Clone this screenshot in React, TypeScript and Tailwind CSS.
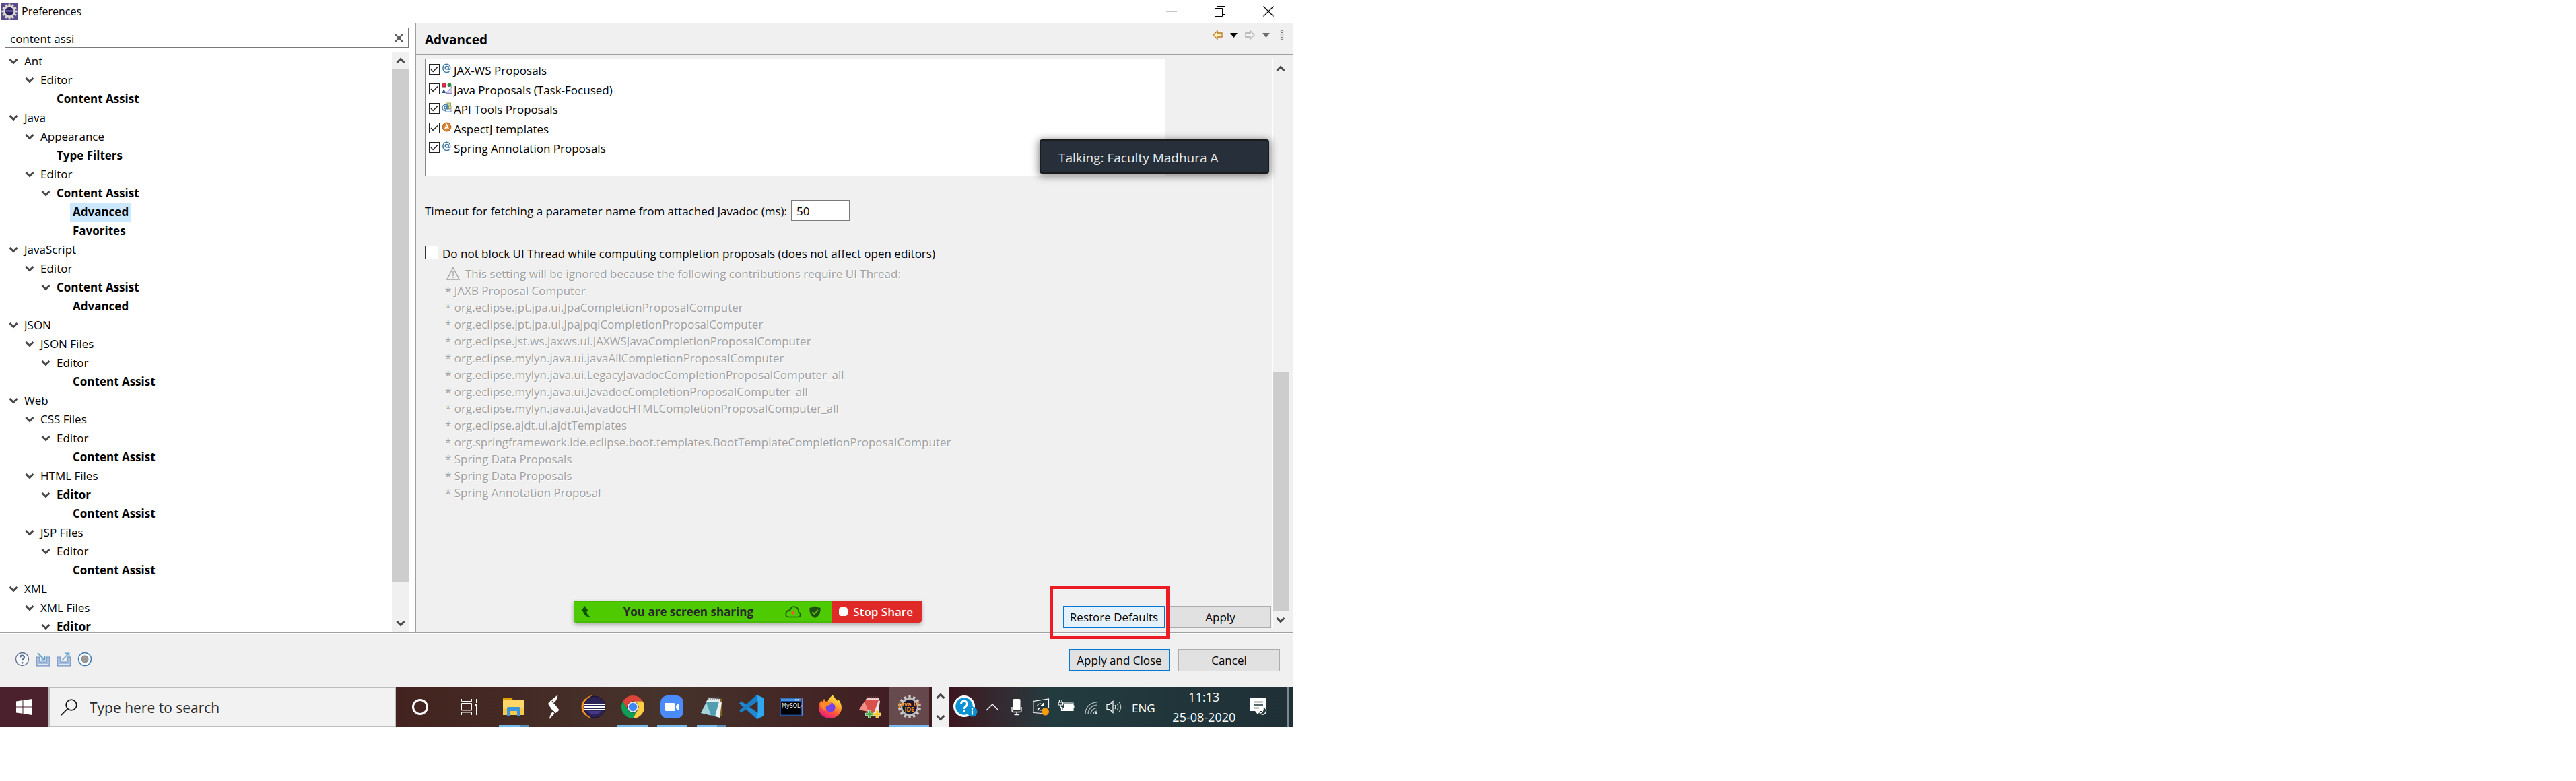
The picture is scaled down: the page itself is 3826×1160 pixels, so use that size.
import type { ReactNode } from 'react';

type Node = { label: string; level: number; open?: boolean; bold?: boolean; selected?: boolean };

const tree: Node[] = [
  { label: 'Ant', level: 0, open: true },
  { label: 'Editor', level: 1, open: true },
  { label: 'Content Assist', level: 2, bold: true },
  { label: 'Java', level: 0, open: true },
  { label: 'Appearance', level: 1, open: true },
  { label: 'Type Filters', level: 2, bold: true },
  { label: 'Editor', level: 1, open: true },
  { label: 'Content Assist', level: 2, open: true, bold: true },
  { label: 'Advanced', level: 3, bold: true, selected: true },
  { label: 'Favorites', level: 3, bold: true },
  { label: 'JavaScript', level: 0, open: true },
  { label: 'Editor', level: 1, open: true },
  { label: 'Content Assist', level: 2, open: true, bold: true },
  { label: 'Advanced', level: 3, bold: true },
  { label: 'JSON', level: 0, open: true },
  { label: 'JSON Files', level: 1, open: true },
  { label: 'Editor', level: 2, open: true },
  { label: 'Content Assist', level: 3, bold: true },
  { label: 'Web', level: 0, open: true },
  { label: 'CSS Files', level: 1, open: true },
  { label: 'Editor', level: 2, open: true },
  { label: 'Content Assist', level: 3, bold: true },
  { label: 'HTML Files', level: 1, open: true },
  { label: 'Editor', level: 2, open: true, bold: true },
  { label: 'Content Assist', level: 3, bold: true },
  { label: 'JSP Files', level: 1, open: true },
  { label: 'Editor', level: 2, open: true },
  { label: 'Content Assist', level: 3, bold: true },
  { label: 'XML', level: 0, open: true },
  { label: 'XML Files', level: 1, open: true },
  { label: 'Editor', level: 2, open: true, bold: true },
];

const indents = ['pl-2', 'pl-8', 'pl-14', 'pl-20'];

const contributions = [
  'JAXB Proposal Computer',
  'org.eclipse.jpt.jpa.ui.JpaCompletionProposalComputer',
  'org.eclipse.jpt.jpa.ui.JpaJpqlCompletionProposalComputer',
  'org.eclipse.jst.ws.jaxws.ui.JAXWSJavaCompletionProposalComputer',
  'org.eclipse.mylyn.java.ui.javaAllCompletionProposalComputer',
  'org.eclipse.mylyn.java.ui.LegacyJavadocCompletionProposalComputer_all',
  'org.eclipse.mylyn.java.ui.JavadocCompletionProposalComputer_all',
  'org.eclipse.mylyn.java.ui.JavadocHTMLCompletionProposalComputer_all',
  'org.eclipse.ajdt.ui.ajdtTemplates',
  'org.springframework.ide.eclipse.boot.templates.BootTemplateCompletionProposalComputer',
  'Spring Data Proposals',
  'Spring Data Proposals',
  'Spring Annotation Proposal',
];

function Chevron({ up = false }: { up?: boolean }) {
  return (
    <svg width="14" height="14" viewBox="0 0 14 14" fill="none" stroke="#484848" strokeWidth="3">
      <path d={up ? 'M1.5 10 7 4.5 12.5 10' : 'M1.5 4 7 9.5 12.5 4'} />
    </svg>
  );
}

function Gear() {
  const teeth = Array.from({ length: 12 }, (_, i) => i * 30);
  return (
    <svg width="24" height="24" viewBox="0 0 24 24">
      <rect width="24" height="24" fill="#5b4a8c" />
      {teeth.map((a) => (
        <rect key={a} x="10.6" y="0.5" width="2.8" height="5" fill="#dcd9d2" transform={`rotate(${a} 12 12)`} />
      ))}
      <circle cx="12" cy="12" r="7.6" fill="#2f2660" stroke="#dcd9d2" strokeWidth="2.6" />
      <path d="M6.5 10.5h11M6 12.5h12M6.5 14.5h11" stroke="#5d5496" strokeWidth=".9" />
    </svg>
  );
}

function AtIcon() {
  return (
    <svg width="16" height="16" viewBox="0 0 16 16" fill="none" stroke="#3f7aa6" strokeWidth="1.5">
      <circle cx="7.5" cy="6.8" r="2.3" />
      <path d="M10 4.3v4c0 1.6 2.7 1.5 2.7-1.6C12.7 3.3 10.4 1.2 7.4 1.2 4.2 1.2 1.9 3.7 1.9 7.2s2.3 6.3 5.6 6.3c1.5 0 2.9-.4 4-1.1" />
    </svg>
  );
}

function TaskIcon() {
  return (
    <svg width="16" height="16" viewBox="0 0 16 16">
      <rect x=".5" y=".5" width="5.5" height="5.5" fill="#d8304a" stroke="#a81f38" />
      <circle cx="11.5" cy="3.2" r="2.9" fill="#2f8a4e" />
      <path d="M3.2 9 6 15H.4Z" fill="#1d4f8f" />
      <path d="M15.5 5v10.500H6.500Z" fill="#cfc8ea" stroke="#8a7fc0" />
      <path d="M13 10.500v2.700h-2.600Z" fill="#fff" />
    </svg>
  );
}

function ApiIcon() {
  return (
    <svg width="16" height="16" viewBox="0 0 16 16" fill="none">
      <rect x="6.5" y="1" width="7" height="4" fill="#cfe39a" stroke="#8fae50" />
      <rect x="8.5" y="6" width="5.5" height="3.5" fill="#f6e9a8" stroke="#b9a45c" />
      <rect x="6" y="11" width="8" height="3" fill="#fff" stroke="#5d8bb5" />
      <circle cx="6" cy="8" r="2" stroke="#4a83ad" strokeWidth="1.3" fill="#e8f2fa" />
      <path d="M8.2 6v3c0 1.2 2 1.2 2-1.2C10.2 5.2 8.5 3.5 6 3.5 3.2 3.5 1 5.4 1 8.2s2 4.3 5 4.3" stroke="#4a83ad" strokeWidth="1.3" />
    </svg>
  );
}

function AspectIcon() {
  return (
    <svg width="16" height="16" viewBox="0 0 16 16">
      <circle cx="7.5" cy="7.5" r="6.5" fill="#d98434" stroke="#b8651c" />
      <path d="M4.6 11 7.5 4 10.4 11M5.7 8.7h3.600" fill="none" stroke="#fff" strokeWidth="1.5" />
    </svg>
  );
}

const proposals: { label: string; icon: ReactNode }[] = [
  { label: 'JAX-WS Proposals', icon: <AtIcon /> },
  { label: 'Java Proposals (Task-Focused)', icon: <TaskIcon /> },
  { label: 'API Tools Proposals', icon: <ApiIcon /> },
  { label: 'AspectJ templates', icon: <AspectIcon /> },
  { label: 'Spring Annotation Proposals', icon: <AtIcon /> },
];

function TitleBar() {
  return (
    <header className="flex h-[34px] shrink-0 items-center bg-white">
      <div className="flex flex-1 items-center gap-1.5 pl-0.5">
        <Gear />
        <h1 className="text-base">Preferences</h1>
      </div>
      <div className="flex items-center gap-14 pr-7">
        <button type="button" aria-label="Minimize" className="flex w-4 justify-center">
          <span className="h-px w-4 bg-[#c4c4c4]" />
        </button>
        <button type="button" aria-label="Restore" className="flex w-4 justify-center">
          <svg width="16" height="16" viewBox="0 0 16 16" fill="none" stroke="#000">
            <path d="M.5 3.5h11v12H.5ZM3.5 3.5v-3h12v12h-4" />
          </svg>
        </button>
        <button type="button" aria-label="Close" className="flex w-4 justify-center">
          <svg width="16" height="16" viewBox="0 0 16 16" fill="none" stroke="#000" strokeWidth="1.2">
            <path d="m.5.5 15 15M15.5.5l-15 15" />
          </svg>
        </button>
      </div>
    </header>
  );
}

function Sidebar() {
  return (
    <nav aria-label="Preference pages" className="flex flex-col border-r border-[#a0a0a0] bg-white pt-[7px]">
      <div className="mr-2.5 ml-[7px] flex h-[30px] items-center border border-[#7a7a7a] bg-white">
        <input aria-label="Filter" defaultValue="content assi" className="min-w-0 flex-1 pt-1 pl-[7px] text-[17px] outline-none" />
        <button type="button" aria-label="Clear" className="flex w-7 justify-center">
          <svg width="13" height="13" viewBox="0 0 13 13" stroke="#5a5a5a" strokeWidth="2.2">
            <path d="m1 1 11 11M12 1 1 12" />
          </svg>
        </button>
      </div>
      <div className="mt-1.5 flex flex-1">
        <ul className="h-0 min-h-full flex-1 overflow-hidden">
          {tree.map((n, i) => (
            <li key={i} className={`flex h-7 items-center ${indents[n.level]}`}>
              {n.open ? (
                <button type="button" aria-label={`Collapse ${n.label}`} className="flex w-6 justify-center">
                  <Chevron />
                </button>
              ) : (
                <span className="w-6" />
              )}
              <a
                href="#"
                className={`px-1 text-[17px] leading-7 ${n.bold ? 'font-bold' : ''} ${n.selected ? 'bg-[#cce8ff]' : ''}`}
              >
                {n.label}
              </a>
            </li>
          ))}
        </ul>
        <div className="mr-2.5 flex w-[25px] flex-col bg-[#f0f0f0]">
          <button type="button" aria-label="Scroll up" className="flex h-[26px] items-center justify-center">
            <Chevron up />
          </button>
          <div className="flex-1">
            <div className="h-[94%] bg-[#cdcdcd]" />
          </div>
          <button type="button" aria-label="Scroll down" className="flex h-[26px] items-center justify-center">
            <Chevron />
          </button>
        </div>
      </div>
    </nav>
  );
}

function ShareBar() {
  return (
    <div className="absolute bottom-[14px] left-[18%] flex h-[33px] items-stretch rounded-b shadow-[0_3px_6px_rgba(0,0,0,0.3)]">
      <div className="flex w-[384px] items-center rounded-bl border border-t-2 border-b-2 border-[#46bb02] bg-[#4dca00] pl-2.5">
        <svg width="15" height="17" viewBox="0 0 15 17" fill="#0d5200">
          <path d="M5.5 0 0 7.5h3C3 12.5 7.5 17 15 16.5 10.5 15 8.3 11.5 8.5 7.5H11Z" />
        </svg>
        <p className="flex-1 text-center text-[17px] font-bold text-[#26282b]">You are screen sharing</p>
        <svg width="24" height="18" viewBox="0 0 24 18" className="mr-3">
          <path
            d="M4.5 16.5h15c4 0 4.4-5.5.8-7.2C20.5 4 17 1 12.5 1.2 9.5 1.3 8.3 4 7.5 6.2 3.5 6.500 1.5 9 1.2 12c-.3 2.7 1 4.5 3.3 4.5Z"
            fill="none"
            stroke="#1a5a0a"
            strokeWidth="1.7"
          />
          <ellipse cx="12" cy="10" rx="2.5" ry="2.7" fill="#f6553c" />
        </svg>
        <svg width="17" height="18" viewBox="0 0 17 18" className="mr-4">
          <path d="M8.5 0c2 2 5 2.6 8 2.7C17 9 15.5 15 8.5 18 1.5 15 0 9 .5 2.7 3.5 2.6 6.5 2 8.5 0Z" fill="#1f4d12" />
          <path d="m4.5 9 3 3 5.500-6" fill="none" stroke="#59d010" strokeWidth="1.8" />
        </svg>
      </div>
      <button type="button" className="flex w-[133px] items-center gap-2 rounded-br bg-[#e02a28] pl-2.5 text-[17px] font-semibold text-white">
        <span className="h-[13px] w-[13px] rounded-sm bg-white" />
        Stop Share
      </button>
    </div>
  );
}

function Page() {
  return (
    <section className="relative flex flex-col bg-[#f0f0f0]">
      <div className="flex h-[46px] items-center pl-[13px]">
        <h2 className="flex-1 pt-1 text-[19px] leading-7 font-bold">Advanced</h2>
        <div className="mb-2.5 flex items-center gap-[11px] pr-[13px]">
          <button type="button" aria-label="Back">
            <svg width="15" height="14" viewBox="0 0 15 14" fill="#fdf0bd" stroke="#b97a20" strokeWidth="1.3">
              <path d="M1 7 7 1v3h7v6H7v3Z" />
            </svg>
          </button>
          <button type="button" aria-label="Back history">
            <svg width="11" height="7" viewBox="0 0 11 7">
              <path d="M0 0h11L5.5 7Z" />
            </svg>
          </button>
          <button type="button" aria-label="Forward">
            <svg width="15" height="14" viewBox="0 0 15 14" fill="#f4f4f4" stroke="#ababab" strokeWidth="1.3">
              <path d="M14 7 8 1v3H1v6h7v3Z" />
            </svg>
          </button>
          <button type="button" aria-label="Forward history">
            <svg width="11" height="7" viewBox="0 0 11 7" fill="#6e6e6e">
              <path d="M0 0h11L5.5 7Z" />
            </svg>
          </button>
          <button type="button" aria-label="View menu" className="pl-1">
            <svg width="6" height="16" viewBox="0 0 6 16" fill="none" stroke="#6a6a6a" strokeWidth="1.2">
              <circle cx="3" cy="2.7" r="1.7" />
              <circle cx="3" cy="8" r="1.7" />
              <circle cx="3" cy="13.3" r="1.7" />
            </svg>
          </button>
        </div>
      </div>
      <div className="h-0.5 border-t border-[#a0a0a0] bg-white" />
      <div className="mt-[5px] mb-1.5 flex flex-1">
        <div className="flex flex-1 flex-col pl-[13px]">
          <div className="mr-[158px] border border-t-0 border-[#828790] bg-white">
            <ul className="w-[313px] border-r border-[#ecf0f8] pt-[3px] pb-[26px] pl-[5px]">
              {proposals.map((p) => (
                <li key={p.label}>
                  <label className="flex text-[17px] leading-[29px] whitespace-nowrap">
                    <span className="relative mt-[5px] h-4 w-4">
                      <input type="checkbox" defaultChecked className="block h-4 w-4 appearance-none border border-[#222] bg-white" />
                      <svg className="absolute inset-0" width="16" height="16" viewBox="0 0 16 16" fill="none" stroke="#222" strokeWidth="1.4">
                        <path d="m3 8 3.2 3.5L13 4.5" />
                      </svg>
                    </span>
                    <span className="mt-1 mr-0.5 ml-[3px]">{p.icon}</span>
                    {p.label}
                  </label>
                </li>
              ))}
            </ul>
          </div>
          <div className="mt-[35px] flex items-center gap-1.5 text-[17px]">
            <label htmlFor="timeout" className="pt-0.5">Timeout for fetching a parameter name from attached Javadoc (ms):</label>
            <input id="timeout" defaultValue="50" className="h-[31px] w-[87px] border border-[#7a7a7a] bg-white pt-0.5 pl-[7px]" />
          </div>
          <label className="mt-[35px] flex gap-1.5 text-[17px] leading-7">
            <input type="checkbox" className="mt-0.5 h-5 w-5 appearance-none border border-[#333] bg-white" />
            Do not block UI Thread while computing completion proposals (does not affect open editors)
          </label>
          <div className="mt-0.5 pl-[30px] text-[17px] leading-[25px] text-[#a0a0a0] [text-shadow:1px_1px_0_#fff]">
            <p className="flex h-[26px] items-center gap-2 pl-0.5">
              <svg width="20" height="20" viewBox="0 0 20 20" fill="none" stroke="#a0a0a0" strokeWidth="1.3">
                <path d="M10 1.5 19 19H1ZM10 7v7M10 15.5V17" />
              </svg>
              This setting will be ignored because the following contributions require UI Thread:
            </p>
            <ul>
              {contributions.map((c, i) => (
                <li key={i}>* {c}</li>
              ))}
            </ul>
          </div>
          <div className="mt-auto flex justify-end gap-[7px] pr-px text-[17px]">
            <div className="relative">
              <button type="button" className="h-[33px] w-[151px] border border-[#0078d7] bg-[#e5f1fb]">Restore Defaults</button>
              <span className="pointer-events-none absolute -top-[30px] -right-[7px] -bottom-4 -left-5 z-10 border-5 border-[#ed1c24]" />
            </div>
            <button type="button" className="h-[33px] w-[151px] border border-[#adadad] bg-[#e1e1e1]">Apply</button>
          </div>
        </div>
        <div className="mr-1.5 flex w-[25px] flex-col border-l border-white">
          <button type="button" aria-label="Scroll up" className="flex h-[30px] items-center justify-center">
            <Chevron up />
          </button>
          <div className="flex flex-1 flex-col justify-end">
            <div className="h-[45%] bg-[#cdcdcd]" />
          </div>
          <button type="button" aria-label="Scroll down" className="flex h-[25px] items-center justify-center">
            <Chevron />
          </button>
        </div>
      </div>
      <div className="absolute top-[173px] right-[35px] flex h-[51px] w-[341px] items-center rounded-sm border-2 border-[#1b1b1b] bg-[#262f3a] pt-1 pl-[26px] text-[19px] text-[#e8eaec] shadow-[0_2px_12px_2px_rgba(0,0,0,0.45)]">
        Talking: Faculty Madhura A
      </div>
      <ShareBar />
    </section>
  );
}

function Footer() {
  return (
    <footer className="flex h-20 shrink-0 items-center border-t border-white bg-[#f0f0f0] pr-[19px] pl-[22px] text-[17px]">
      <div className="flex flex-1 items-center gap-[9px] pb-1">
        <button type="button" aria-label="Help">
          <svg width="22" height="22" viewBox="0 0 22 22" fill="none" stroke="#5f6f93">
            <circle cx="11" cy="11" r="9.5" fill="#f7f8fb" strokeWidth="1.3" />
            <path d="M8 8.500C8 4.800 14 4.800 14 8.300c0 2.400-2.900 2.400-2.900 5M11.100 15v2.400" strokeWidth="2.4" />
          </svg>
        </button>
        <button type="button" aria-label="Import">
          <svg width="22" height="22" viewBox="0 0 22 22" fill="none">
            <path d="M1 8h5v7h10V8h5v13H1Z" fill="#a9bfe0" stroke="#6f8fc0" strokeWidth="1.2" />
            <path d="M3.500 10v8.500h15V10" stroke="#dfe8f5" />
            <path d="m3 2 10 10M13.5 6.500v6H8" stroke="#5fa3cc" strokeWidth="1.8" />
          </svg>
        </button>
        <button type="button" aria-label="Export">
          <svg width="22" height="22" viewBox="0 0 22 22" fill="none">
            <path d="M1 8h5v7h10V8h5v13H1Z" fill="#a9bfe0" stroke="#6f8fc0" strokeWidth="1.2" />
            <path d="M3.500 10v8.500h15V10" stroke="#dfe8f5" />
            <path d="M8 13 18 2.500M13 2.500h5.500V8" stroke="#5fa3cc" strokeWidth="1.8" />
          </svg>
        </button>
        <button type="button" aria-label="Record preferences">
          <svg width="22" height="22" viewBox="0 0 22 22">
            <circle cx="11" cy="11" r="9.5" fill="#f9fafc" stroke="#3d79ad" strokeWidth="1.5" />
            <circle cx="11" cy="11" r="5" fill="#9a9a9a" stroke="#7e7e7e" />
          </svg>
        </button>
      </div>
      <div className="flex gap-3">
        <button type="button" className="h-[33px] w-[151px] border-2 border-[#0078d7] bg-[#e1e1e1]">Apply and Close</button>
        <button type="button" className="h-[33px] w-[151px] border border-[#adadad] bg-[#e1e1e1]">Cancel</button>
      </div>
    </footer>
  );
}

const apps: { name: string; bar?: 'one' | 'two'; active?: boolean; icon: ReactNode }[] = [
  {
    name: 'File Explorer',
    bar: 'two',
    icon: (
      <svg width="34" height="30" viewBox="0 0 34 30">
        <path d="M1 2h13l2 3h17v22H1Z" fill="#ffd766" />
        <path d="M1 2c0-1 .5-1 1-1h12l1.5 2-1.5 2H1Z" fill="#e0a000" />
        <path d="M1 16h32v11H1Z" fill="#fbc94a" />
        <path d="M7 28V17q0-2 2-2h16q2 0 2 2v11h-5v-7H12v7Z" fill="#3a96dd" />
      </svg>
    ),
  },
  {
    name: 'S editor',
    icon: (
      <svg width="18" height="38" viewBox="0 0 18 38">
        <path d="M15.5 1C14.500 7 13 10 9.500 13L17.500 23.500C15 27 11 28 8.500 31L3 37C4 31 5.500 28 8.500 25.500L1 14.500C3 10 9 7 15.500 1Z" fill="#fff" />
        <path d="m7 10 2.500 4M9 25l2 4" stroke="#43302a" strokeWidth="1.2" />
      </svg>
    ),
  },
  {
    name: 'Eclipse',
    icon: (
      <svg width="38" height="36" viewBox="0 0 38 36">
        <path d="M18 1C9 2 1.5 9 1.5 18S9 34 18 35C4 27 4 9 18 1Z" fill="#f7941e" />
        <circle cx="21" cy="18" r="16" fill="#2c2255" stroke="#16102e" />
        <path d="M11 24h20a12 12 0 0 1-20 0Z" fill="#473788" />
        <path d="M5.5 14h31M5 18h32M5.5 22h31" stroke="#fff" strokeWidth="2.2" />
      </svg>
    ),
  },
  {
    name: 'Chrome',
    bar: 'one',
    icon: (
      <svg width="34" height="34" viewBox="0 0 24 24">
        <path d="M1.61 6A12 12 0 0 1 22.39 6H12A6 6 0 0 0 6.8 15Z" fill="#db4437" />
        <path d="M1.61 6 6.8 15a6 6 0 0 0 10.4 0L12 24A12 12 0 0 1 1.61 6Z" fill="#0f9d58" />
        <path d="M22.39 6H12a6 6 0 0 1 5.2 9L12 24A12 12 0 0 0 22.39 6Z" fill="#ffcd40" />
        <circle cx="12" cy="12" r="5.5" fill="#f1f1f1" />
        <circle cx="12" cy="12" r="4.4" fill="#4285f4" />
      </svg>
    ),
  },
  {
    name: 'Zoom',
    bar: 'one',
    icon: (
      <svg width="34" height="34" viewBox="0 0 34 34">
        <rect width="34" height="34" rx="10" fill="#4a8cff" />
        <path d="M6 11h13q3 0 3 3v9H9q-3 0-3-3ZM23 15l5-4v12l-5-4Z" fill="#fff" />
      </svg>
    ),
  },
  {
    name: 'Notepad',
    bar: 'two',
    icon: (
      <svg width="34" height="34" viewBox="0 0 34 34">
        <path d="m30 4 3 2v24l-5 2Z" fill="#7d6328" />
        <path d="M12 4 30 5 23 31 1 26Z" fill="#4f9fb0" />
        <path d="M12 4 30 5 29 10 9 9Z" fill="#e4ecee" />
        <path d="M9 10 1 26l15 3.500Z" fill="#a4d3da" />
        <path d="M28 9 22 31l7 2 3-24Z" fill="#f0f2f0" />
        <path d="M12 2v4m3-4v4m3-4v4m3-4v4m3-4v4m3-4v4" stroke="#666" />
      </svg>
    ),
  },
  {
    name: 'Visual Studio Code',
    icon: (
      <svg width="36" height="36" viewBox="0 0 36 36">
        <path d="M0 12.500 3 9.500 28 27v9h-2Z" fill="#1f8ad2" />
        <path d="M0 23.500 26 0h2v9L3 26.500Z" fill="#1a7fc6" />
        <path d="M26 0l10 4.500v27L26 36l1.500-9V9Z" fill="#2fa8f2" />
      </svg>
    ),
  },
  {
    name: 'MySQL',
    icon: (
      <svg width="34" height="28" viewBox="0 0 34 28">
        <rect x=".5" y=".5" width="33" height="27" rx="1.5" fill="#1d4c94" stroke="#5c8fd6" />
        <path d="M2 1.5h30V5H2Z" fill="#4a90dd" />
        <path d="M23 2h2.5v2.500H23Zm3.500 0H29v2.500h-2.500Z" fill="#bfe0ff" />
        <path d="M29.5 2H32v2.500h-2.500Z" fill="#e2592d" />
        <rect x="2" y="6" width="30" height="19.5" fill="#000" />
        <text x="3" y="15" fontSize="8" fill="#eee" fontFamily="DejaVu Sans">MySQL›</text>
      </svg>
    ),
  },
  {
    name: 'Firefox',
    icon: (
      <svg width="36" height="36" viewBox="0 0 36 36">
        <defs>
          <linearGradient id="fox" x1=".8" y1="0" x2=".3" y2="1">
            <stop offset="0" stopColor="#fff44f" />
            <stop offset=".35" stopColor="#ffb02e" />
            <stop offset=".65" stopColor="#ff5a36" />
            <stop offset="1" stopColor="#e31587" />
          </linearGradient>
        </defs>
        <path d="M22 0c1 4 5 6 7 9l.5-3C33 10 35 14 35 19c0 9-7.5 16-17 16S1 28 1 19c0-5 1.5-8 4-11l1 3 3-5 1.500 4 4-.5C16 5 19 3 22 0Z" fill="url(#fox)" />
        <circle cx="18.5" cy="18.5" r="7" fill="#7542e5" />
        <path d="M5 7c-1 3 0 4 1 5l4-6c0 3 1 4 3 4 3 0 5 1 7 3-1 2-5 2-8 4-1 2-1 5 0 7C6 22 2 15 5 7Z" fill="#ff8a26" />
      </svg>
    ),
  },
  {
    name: 'Notes',
    icon: (
      <svg width="34" height="34" viewBox="0 0 34 34">
        <path d="M28 5 32 8 29 28l-7-2Z" fill="#e6e4ea" />
        <path d="M13 3 31 4 23 26 1 21Z" fill="#d9504c" />
        <path d="M13 3 31 4 30 7 11 6Z" fill="#efd4d2" />
        <path d="M9 9 1 21l14 3Z" fill="#ee8f88" />
        <path d="M13 1.500v3m3-3v3m3-3v3m3-3v3m3-3v3m3-3v3" stroke="#9a5a5a" />
        <path d="M14.500 22h3.500v4h4v3.500h-4v4h-3.500v-4h-4V26h4Z" fill="#3fae3f" stroke="#e8ffe8" strokeWidth=".7" />
        <path d="M26 22h3.500v4h4v3.500h-4v4H26v-4h-4V26h4Z" fill="#f2c81e" stroke="#fff8d0" strokeWidth=".7" />
      </svg>
    ),
  },
  {
    name: 'Java EE IDE',
    bar: 'one',
    active: true,
    icon: (
      <svg width="34" height="34" viewBox="0 0 34 34">
        {Array.from({ length: 14 }, (_, i) => (
          <rect key={i} x="15.3" y="0" width="3.4" height="6" fill="#c9c9c9" transform={`rotate(${(i * 360) / 14} 17 17)`} />
        ))}
        <circle cx="17" cy="17" r="12" fill="#1d1733" stroke="#bdbdbd" strokeWidth="2.5" />
        <text x="17" y="16" fontSize="8" fontWeight="bold" fill="#f7941e" textAnchor="middle" fontFamily="DejaVu Sans">Java EE</text>
        <text x="17" y="23.5" fontSize="8" fontWeight="bold" fill="#f7941e" textAnchor="middle" fontFamily="DejaVu Sans">IDE</text>
      </svg>
    ),
  },
];

function Taskbar() {
  return (
    <div className="flex h-[60px] shrink-0 items-stretch">
      <div className="flex flex-1 items-stretch">
        <button type="button" aria-label="Start" className="flex w-[72px] items-center justify-center bg-[#4a212d]">
          <svg width="24" height="24" viewBox="0 0 24 24" fill="#fff">
            <path d="m0 3.500 9.500-1.400v9.300H0ZM10.500 2 24 0v11.400H10.500ZM0 12.500h9.500v9.300L0 20.500ZM10.500 12.500H24V24l-13.500-2Z" />
          </svg>
        </button>
        <label className="flex w-[516px] items-center gap-[18px] border-2 border-[#bebebe] bg-[#f2f2f2] pl-4">
          <svg width="25" height="25" viewBox="0 0 25 25" fill="none" stroke="#111" strokeWidth="1.7">
            <circle cx="16" cy="9" r="7.8" />
            <path d="M10.5 14.5.8 24.2" />
          </svg>
          <input aria-label="Type here to search" placeholder="Type here to search" className="min-w-0 flex-1 pt-1 text-[21px] outline-none placeholder:text-[#2b2b2b]" />
        </label>
        <div className="flex flex-1 items-stretch bg-linear-to-r from-[#43231f] via-[#46332b] to-[#3f1a20] pr-1">
          <button type="button" aria-label="Cortana" className="flex w-[72px] items-center justify-center">
            <span className="h-6 w-6 rounded-full border-3 border-white" />
          </button>
          <button type="button" aria-label="Task View" className="flex w-[74px] items-center justify-center">
            <svg width="25" height="24" viewBox="0 0 25 24" fill="none" stroke="#fff">
              <path d="M.5 0v3.500h15V0M.5 6.500h15v10.500H.5ZM.5 24v-4h15v4M22.500 0v6M22.500 11v13" />
              <path d="M21 7h3v3h-3Z" fill="#fff" stroke="none" />
            </svg>
          </button>
          {apps.map((a) => (
            <button
              key={a.name}
              type="button"
              aria-label={a.name}
              className={`relative flex flex-1 items-center justify-center ${a.active ? 'bg-white/20' : ''}`}
            >
              {a.icon}
              {a.bar && (
                <span className={`absolute bottom-0 flex h-[3px] bg-[#76b9ed] ${a.active ? 'inset-x-0' : 'inset-x-[7px]'}`}>
                  {a.bar === 'two' && <span className="ml-auto w-3.5 bg-[#5c8db5]" />}
                </span>
              )}
            </button>
          ))}
        </div>
      </div>
      <div className="flex w-[26px] flex-col items-center justify-between bg-[#f0f0f0] py-[7px]">
        <Chevron up />
        <Chevron />
      </div>
      <div className="flex w-[510px] items-center bg-linear-to-r from-[#3c1621] via-[#223b3f] via-30% to-[#1f3036] pl-1.5 text-[17px] text-white">
        <svg width="36" height="36" viewBox="0 0 36 36">
          <circle cx="16" cy="17" r="16" fill="#fff" />
          <circle cx="16" cy="17" r="12.8" fill="#0b93d5" />
          <path d="M11.5 13.500c0-6 9-6 9 0 0 4-4.500 3.500-4.500 7.500M16 23v3" stroke="#fff" strokeWidth="3" fill="none" />
          <circle cx="28" cy="25" r="7.5" fill="#0b8fd0" />
          <path d="M28 20v2.200M28 23.500v6" stroke="#fff" strokeWidth="2.2" />
        </svg>
        <svg width="20" height="12" viewBox="0 0 20 12" className="ml-3" fill="none" stroke="#fff" strokeWidth="1.3">
          <path d="m1 11 9-9 9 9" />
        </svg>
        <svg width="16" height="26" viewBox="0 0 16 26" className="ml-[18px]" fill="none" stroke="#fff" strokeWidth="1.3">
          <rect x="2.5" y="1" width="11" height="17" rx="1.5" fill="#fff" stroke="none" />
          <path d="M1 13v5q0 2.500 2.500 2.500h9Q15 20.500 15 18v-5M8 20.500v4M4.500 24.500h7" />
        </svg>
        <svg width="25" height="26" viewBox="0 0 25 26" className="ml-4" fill="none" stroke="#fff" strokeWidth="1.2">
          <path d="M14 22.500.8 21.500V4.500L23.500 1v14M6.500 12c1-5 7-5 9-1.500M15.500 7v3.500H12M16.500 14c-1 5-7 5-9 1.500M7.500 19v-3.500H11" />
          <circle cx="18.5" cy="20" r="5.5" fill="#ff9a0a" stroke="none" />
        </svg>
        <svg width="25" height="18" viewBox="0 0 25 18" className="mb-1 ml-3" fill="none" stroke="#fff" strokeWidth="1.2">
          <path d="M2.5 0v4M6 0v4M1 4h6.500v4H1ZM4.200 8v3.500h3" />
          <path d="M8 5h15v11.500H5.500V13" />
          <path d="M9.5 6.500H22V15H7.500V12h2ZM23 8.500h1.500v4H23Z" fill="#fff" stroke="none" />
        </svg>
        <svg width="20" height="20" viewBox="0 0 20 20" className="mt-1 ml-[15px]" fill="none" stroke="#b9c3c4" strokeWidth="1.2">
          <path d="M1 19C1 8 8 1 19 1M5 19C5 11 11 5 19 5M9 19c0-6 4-9.500 10-9.500M13 19c0-3 2-5 6-5" />
          <circle cx="17" cy="17.5" r="1.5" fill="#fff" stroke="none" />
        </svg>
        <svg width="24" height="20" viewBox="0 0 24 20" className="ml-3" fill="none" stroke="#fff" strokeWidth="1.2">
          <path d="M1 6.500h4l5-5v17l-5-5H1Z" />
          <path d="M13 7q2 3 0 6" />
          <path d="M16 5q3.500 5 0 10M19 2.500q5.500 7.500 0 15" stroke="#b9c3c4" />
        </svg>
        <span className="ml-3.5 pt-1">ENG</span>
        <div className="flex flex-1 flex-col items-center pl-1 text-[18px] leading-[30px]">
          <span>11:13</span>
          <span>25-08-2020</span>
        </div>
        <svg width="26" height="26" viewBox="0 0 26 26" className="mr-[29px]">
          <path d="M0 0h24v19h-9l-4 5-4-5H0Z" fill="#fff" />
          <path d="M5 5.500h14M5 10h14M5 14.500h8" stroke="#22363b" strokeWidth="1.5" />
          <path d="M19 13c4 1 6 4 4 8-2 4-7 4-9 1 4 0 6-4 5-9Z" fill="#22363b" stroke="#fff" strokeWidth="1.2" />
        </svg>
        <span className="mr-1.5 h-full w-0.5 bg-[#7d898c]" />
      </div>
    </div>
  );
}

export default function App() {
  return (
    <div className="grid h-screen grid-cols-[1920fr_1906fr] bg-white pb-20 font-['Open_Sans','Noto_Sans',sans-serif] text-black">
      <div className="flex min-w-0 flex-col">
        <TitleBar />
        <main className="grid flex-1 grid-cols-[618fr_1302fr] border-b border-[#a0a0a0]">
          <Sidebar />
          <Page />
        </main>
        <Footer />
        <Taskbar />
      </div>
    </div>
  );
}
